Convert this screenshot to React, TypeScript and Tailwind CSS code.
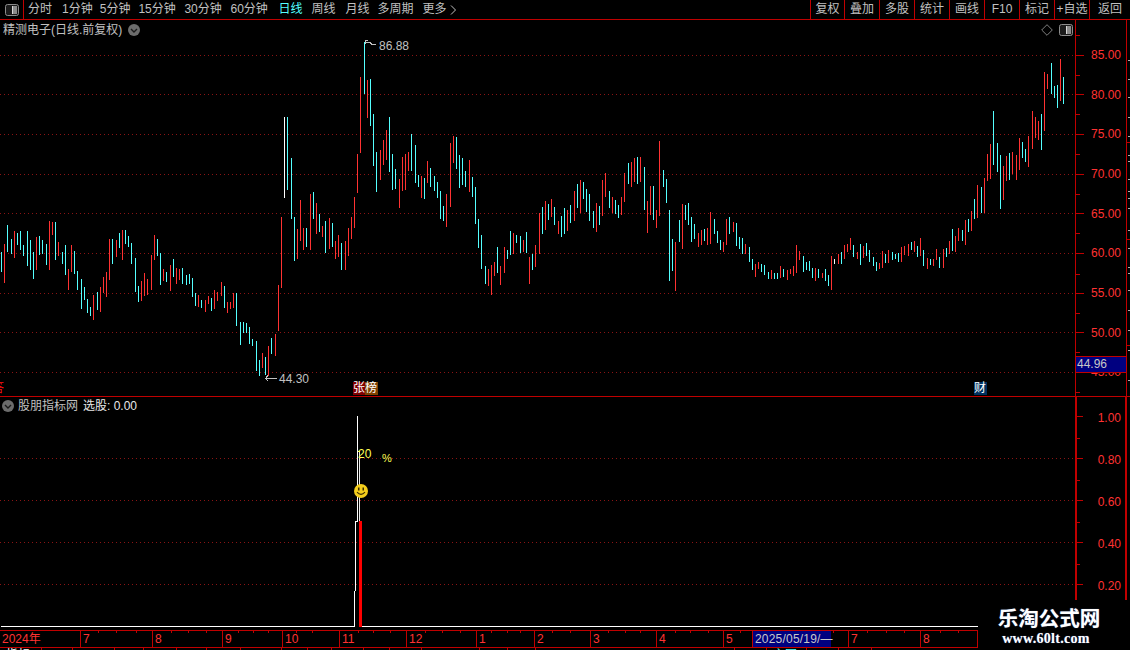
import React from "react";

type C = { x: number; t: number; b: number; c: string };
const COL: Record<string, string> = { r: "#ff3232", c: "#54ffff", w: "#ffffff" };
const parse = (s: string, ox: number, oy: number): C[] =>
  s.trim().split(/\s*;\s*/).filter(Boolean).map((p) => {
    const [k, x, t, b] = p.trim().split(/\s+/);
    return { x: Math.floor(+x / 3) + ox, t: Math.round(+t / 3) + oy, b: Math.round(+b / 3) + oy, c: COL[k] };
  });

const z3 = `c 4 127 186;r 13 102 218;c 22 45 126;c 34 87 132;r 43 64 143;c 52 70 105;c 61 64 120;c 70 105 138;c 82 64 168;c 91 90 180;c 100 126 207;r 109 82 180;c 118 79 135;c 127 90 132;c 139 102 165;r 148 33 180;r 157 37 75;c 166 37 150;r 175 97 138;c 187 126 162;c 196 105 195;r 205 178 240;r 214 105 187;c 223 124 192;c 232 183 240;c 244 208 297;c 253 231 270;c 262 267 309;c 271 291 318;r 280 255 330;c 292 247 300;r 301 231 306;r 310 201 249;r 319 186 261;r 328 87 210;c 337 87 162;r 349 90 141;c 358 69 114;r 367 60 150;c 376 60 102;c 385 78 111;c 394 99 162;c 406 144 246;c 415 228 276;r 424 213 273;r 433 189 258;r 442 207 255;r 454 135 240;r 463 75 150;c 472 87 138;c 481 129 225;r 490 177 213;c 499 186 216;r 511 165 243;c 520 147 201;r 529 174 222;r 538 177 210;c 547 174 222;c 559 195 225;c 568 192 222;c 577 204 261;c 586 249 288;r 595 255 291;c 604 270 294;r 616 270 306;r 625 258 282;c 634 264 303;r 643 240 297;r 652 246 273;r 664 216 258;c 673 228 294;r 682 276 309;r 691 276 297;r 700 249 294;c 709 249 348;c 721 336 405;c 730 336 369;c 739 339 369;c 748 351 402;c 757 387 408;c 769 393 483;c 778 450 498;r 787 429 474;c 796 441 495;r 805 408 498;c 814 384 432;r 826 372 438;r 835 225 363;r 844 21 234`;
const z4 = `w 13 262 503;c 22 262 481;c 34 385 566;c 43 561 692;r 52 597 687;r 61 510 633;r 70 594 660;c 79 594 651;r 91 492 660;c 100 486 567;r 109 519 612;c 118 552 606;r 127 588 621;c 136 573 669;r 148 564 657;c 157 579 651;r 166 633 687;r 175 615 681;c 184 639 720;r 196 633 720;r 205 594 678;r 214 561 627;r 223 501 594;r 232 372 489;r 241 141 369;c 253 36 192;r 262 150 264;c 271 147 288;c 280 252 408;c 289 366 486;r 301 360 450;r 310 330 405;r 319 300 390;c 328 261 426;c 337 372 480;c 346 417 477;r 358 447 534;r 367 381 483;r 376 372 480;r 385 366 423;c 394 312 423;c 406 345 459;c 415 435 471;r 424 438 504;c 433 444 507;r 442 393 459;c 451 414 471;c 463 438 483;c 472 456 504;c 481 483 567;c 490 528 573;r 499 492 591;r 511 339 531;r 520 318 399;c 529 321 417;c 538 375 474;c 547 384 465;c 556 423 471;r 568 390 486;c 577 441 501;c 586 471 582;c 595 567 654;c 604 615 717;c 616 708 762;r 625 717 768;r 634 705 795;r 643 696 738;c 652 651 729;r 661 708 765;r 673 651 729;c 682 660 687;c 691 603 675;r 700 609 672;c 709 615 639;c 721 618 669;r 730 630 666;c 739 606 669;r 748 681 762;c 757 672 720;r 766 645 711`;
const z5 = `r 28 249 372;c 37 231 312;r 46 213 300;c 55 222 270;r 64 207 261;c 73 231 285;r 85 273 312;c 94 258 321;c 103 234 312;r 112 240 303;c 121 225 279;r 133 183 273;c 142 162 234;r 151 150 249;c 160 156 207;c 169 177 246;c 178 192 273;c 190 243 294;r 199 219 306;c 208 228 285;r 217 150 258;r 226 129 201;c 238 183 234;r 247 201 249;c 256 210 252;c 265 225 264;r 274 201 255;r 283 129 216;c 295 99 162;r 304 96 171;r 313 84 156;c 322 81 162;r 331 81 156;c 343 111 240;r 352 213 309;r 361 168 255;c 370 168 270;r 379 240 294;r 388 33 258;c 400 120 171;c 409 147 219;c 418 240 453;c 427 327 423;r 436 336 483;c 448 270 336;r 457 222 357;c 466 225 270;c 475 219 285;c 484 261 336;c 493 282 327;r 505 309 351;r 514 300 345;c 523 297 333;r 532 294 345;r 541 246 342;c 553 267 312;c 562 303 339;c 571 330 360;r 580 336 366;r 589 267 345;c 598 261 312;r 610 276 306;c 619 279 348;c 628 321 357;c 637 324 372;r 646 342 372;c 658 351 396;c 667 387 420;r 676 402 441;r 685 396 417;c 694 402 426;c 703 405 435;c 715 426 447;r 724 420 447;c 733 429 447;c 742 429 447;r 751 408 444;c 760 417 441;r 772 420 450;r 781 417 432;r 790 408 438;r 799 345 429;r 808 363 390;c 820 378 426;c 829 396 420;c 838 393 423;c 847 414 444;r 856 414 453;c 865 417 444;r 877 429 444;c 886 417 453;c 895 435 468`;
const z6 = `r 34 618 720;w 43 627 642;r 55 612 642;c 64 606 642;r 73 585 627;r 82 582 606;r 91 564 600;c 100 585 621;r 112 606 627;c 121 582 645;r 130 588 624;c 139 579 618;c 148 600 636;c 160 621 648;c 169 636 663;r 178 639 657;r 187 603 654;c 196 612 639;r 205 600 639;c 217 606 630;c 226 612 627;c 235 609 636;r 244 591 636;r 253 588 615;r 265 582 618;c 274 576 600;r 283 573 606;c 292 588 621;r 301 564 618;c 310 600 648;r 322 624 657;c 331 627 645;r 340 627 648;r 349 597 630;c 358 621 654;r 370 597 654;c 379 594 621;r 388 573 612;c 397 537 603;r 406 558 606;r 415 534 573;c 427 540 573;r 436 510 585;c 445 507 546;r 454 483 543;c 463 447 507;r 472 405 504;c 484 411 489;r 493 384 489;r 502 312 393;r 511 282 387;c 520 183 345;c 532 279 366;c 541 315 477;r 550 348 450;r 559 318 393;c 568 309 390;r 577 306 372;r 589 315 390;r 598 264 360;c 607 276 324;c 616 297 336;r 625 258 351;r 637 183 297;r 646 201 264;r 655 213 270;c 664 192 300;r 673 66 243;r 682 72 117;c 694 39 132;c 703 108 144;c 712 105 174;r 721 27 153;c 730 81 162`;

const candles: C[] = [...parse(z3, 0, 210), ...parse(z4, 280, 30), ...parse(z5, 530, 130), ...parse(z6, 820, 50)];

const GRID_UP = [55, 94, 134, 174, 213, 253, 293, 332, 372];
const GRID_LOW = [458, 500, 542, 584];
const AXIS = "#c00000";
const DOT = "#8a1414";

const leftItems: [string, string, boolean][] = [
  ["分时", "ml-[4px]", false],
  ["1分钟", "ml-[10px]", false],
  ["5分钟", "ml-[7px]", false],
  ["15分钟", "ml-[8px]", false],
  ["30分钟", "ml-[8.7px]", false],
  ["60分钟", "ml-[8.7px]", false],
  ["日线", "ml-[10.7px]", true],
  ["周线", "ml-[9px]", false],
  ["月线", "ml-[10px]", false],
  ["多周期", "ml-[8px]", false],
  ["更多", "ml-[9px]", false],
];
const rightItems: [string, string][] = [
  ["复权", "w-[34px]"],
  ["叠加", "w-[35px]"],
  ["多股", "w-[35px]"],
  ["统计", "w-[35px]"],
  ["画线", "w-[35px]"],
  ["F10", "w-[35px]"],
  ["标记", "w-[35px]"],
  ["+自选", "w-[35px]"],
  ["返回", "w-[41px]"],
];

const upperLabels = ["85.00", "80.00", "75.00", "70.00", "65.00", "60.00", "55.00", "50.00", "45.00"];
const lowerLabels = ["1.00", "0.80", "0.60", "0.40", "0.20"];

const timeline: { w: number; t: string; box?: boolean }[] = [
  { w: 81, t: "2024年" },
  { w: 72, t: "7" },
  { w: 70, t: "8" },
  { w: 60, t: "9" },
  { w: 57, t: "10" },
  { w: 67, t: "11" },
  { w: 70, t: "12" },
  { w: 58, t: "1" },
  { w: 56, t: "2" },
  { w: 66, t: "3" },
  { w: 67, t: "4" },
  { w: 29, t: "5" },
  { w: 78, t: "2025/05/19/—", box: true },
  { w: 18, t: "" },
  { w: 72, t: "7" },
  { w: 57, t: "8" },
];
const smallTicks = [98, 116, 136, 171, 188, 206, 238, 253, 268, 296, 312, 358, 373, 390, 425, 442, 460, 491, 507, 520, 552, 570, 608, 625, 640, 675, 690, 708, 740, 833, 867, 886, 904, 940, 958, 977];
const bottomCells = [42, 31, 42, 29, 33, 30, 34, 41, 26, 24, 32, 26, 32, 58, 28, 28, 199, 32, 40, 32, 33];

const Toggle = () => (
  <svg width="14" height="12" viewBox="0 0 14 12">
    <rect x="0.5" y="0.5" width="13" height="11" rx="2" fill="#1c1c1c" stroke="#8c8c8c" />
    <rect x="7" y="2" width="5" height="8" fill="#8c8c8c" />
    <rect x="7" y="2" width="1" height="8" fill="#d8d8d8" />
  </svg>
);
const Down = () => (
  <svg width="12" height="12" viewBox="0 0 12 12" className="shrink-0">
    <circle cx="6" cy="6" r="6" fill="#6c6c6c" />
    <polyline points="3,5 6,8 9,5" fill="none" stroke="#1a1a1a" strokeWidth="1.4" />
  </svg>
);

export default function App() {
  return (
    <div className="relative flex h-[650px] w-[1130px] flex-col overflow-hidden bg-black font-['Liberation_Sans','Noto_Sans_CJK_SC',sans-serif] text-[12px] text-[#c0c0c0]">
      {/* top bar */}
      <div className="flex h-[20px] shrink-0 items-center border-b border-[#c00000] leading-[19px]">
        <div className="flex h-full w-[24px] items-center justify-center border-r border-[#c00000]">
          <Toggle />
        </div>
        {leftItems.map(([t, cls, on]) => (
          <span key={t} className={`${cls} ${on ? "text-[#54ffff]" : ""} whitespace-nowrap`}>
            {t}
          </span>
        ))}
        <svg width="7" height="10" viewBox="0 0 7 10" className="ml-[3px]">
          <polyline points="1,0.5 5.5,5 1,9.5" fill="none" stroke="#c0c0c0" />
        </svg>
        <div className="ml-auto flex h-full">
          {rightItems.map(([t, w]) => (
            <div key={t} className={`${w} flex items-center justify-center whitespace-nowrap border-l border-[#c00000]`}>
              {t}
            </div>
          ))}
        </div>
      </div>

      {/* upper panel */}
      <div className="flex h-[377px] shrink-0 border-b border-[#c00000]">
        <div className="relative w-[1075px] shrink-0">
          <svg className="absolute inset-0" width="1075" height="376" viewBox="0 20 1075 376" shapeRendering="crispEdges">
            {GRID_UP.map((y) => (
              <line key={y} x1="0" x2="1075" y1={y + 0.5} y2={y + 0.5} stroke={DOT} strokeDasharray="1 3" />
            ))}
            {candles.map((c, i) => (
              <rect key={i} x={c.x} y={c.t} width="1" height={Math.max(1, c.b - c.t)} fill={c.c} />
            ))}
            <polyline points="368,40.5 365.5,40.5 365.5,44 " fill="none" stroke="#c0c0c0" />
            <polyline points="366,42.5 370,42.5 372,44.5 376,44.5" fill="none" stroke="#c0c0c0" />
            <polyline points="268,375 265.5,378.5 268,381" fill="none" stroke="#c0c0c0" />
            <line x1="266" x2="277" y1="378.5" y2="378.5" stroke="#c0c0c0" />
          </svg>
          <div className="relative flex h-[19px] items-center pl-[3px] pt-[1px]">
            <span className="whitespace-nowrap">精测电子(日线.前复权)</span>
            <span className="ml-[6px]">
              <Down />
            </span>
          </div>
          <span className="absolute left-[379px] top-[19px] leading-[14px]">86.88</span>
          <span className="absolute left-[279px] top-[352px] leading-[14px]">44.30</span>
          <svg className="absolute left-[1041px] top-[4px]" width="12" height="12" viewBox="0 0 12 12">
            <polygon points="6,0.7 11.3,6 6,11.3 0.7,6" fill="none" stroke="#808080" />
          </svg>
          <div className="absolute left-[1059px] top-[4px]">
            <Toggle />
          </div>
          <div className="absolute left-0 top-[362px] h-[13px] w-[4px] overflow-hidden text-[#ff1010]">
            <span className="-ml-[8px] block w-[12px] leading-[13px]">答</span>
          </div>
          <div className="absolute left-[353px] top-[362px] flex h-[13px] leading-[13px] text-white">
            <span className="w-[12px] bg-[#800000]">张</span>
            <span className="w-[13px] bg-[#804000]">榜</span>
          </div>
          <span className="absolute left-[974px] top-[362px] h-[13px] w-[13px] bg-[#003060] leading-[13px] text-white">财</span>
        </div>
        <div className="relative w-[52px] shrink-0 border-x border-[#c00000] pt-[15px] text-[#ff3232]">
          <svg className="absolute left-0 top-0" width="10" height="376" viewBox="0 20 10 376" shapeRendering="crispEdges">
            {GRID_UP.map((y) => (
              <line key={y} x1="0" x2="8" y1={y + 0.5} y2={y + 0.5} stroke={AXIS} />
            ))}
            {[35, 75, 114, 154, 194, 233, 274, 313, 352, 392].map((y) => (
              <line key={y} x1="0" x2="4" y1={y + 0.5} y2={y + 0.5} stroke={AXIS} />
            ))}
          </svg>
          {upperLabels.map((l) => (
            <div key={l} className="flex h-[39.7px] items-center justify-end pr-[5px] leading-none">
              {l}
            </div>
          ))}
          <div className="absolute left-0 top-[336px] h-[17px] w-full border-y border-[#c00000] bg-[#000080] pl-[1px] leading-[15px] text-[#c8c8c8]">
            44.96
          </div>
        </div>
        <svg width="3" height="376" viewBox="0 20 3 376" shapeRendering="crispEdges" className="shrink-0">
          {[60, 79, 97, 117, 136, 155, 161, 179, 191, 198, 208, 230, 248, 267, 273, 290, 310, 330, 350, 380].map((y) => (
            <line key={y} x1="1" x2="3" y1={y + 0.5} y2={y + 0.5} stroke="#b0b0b0" />
          ))}
          {[142, 239, 345].map((y) => (
            <line key={y} x1="0" x2="3" y1={y + 0.5} y2={y + 0.5} stroke={AXIS} />
          ))}
        </svg>
      </div>

      {/* lower panel */}
      <div className="flex h-[233px] shrink-0">
        <div className="relative w-[1075px] shrink-0">
          <svg className="absolute inset-0" width="1075" height="233" viewBox="0 397 1075 233" shapeRendering="crispEdges">
            {GRID_LOW.map((y) => (
              <line key={y} x1="0" x2="1075" y1={y + 0.5} y2={y + 0.5} stroke={DOT} strokeDasharray="1 3" />
            ))}
            <rect x="1" y="626" width="354" height="1" fill="#ffffff" />
            <rect x="362" y="626" width="616" height="1" fill="#ffffff" />
            <rect x="354" y="591" width="1" height="36" fill="#ffffff" />
            <rect x="355" y="521" width="1" height="70" fill="#ffffff" />
            <rect x="355" y="521" width="3" height="1" fill="#ffffff" />
            <rect x="357" y="416" width="1" height="106" fill="#ffffff" />
            <rect x="359" y="451" width="1" height="70" fill="#e8e8e8" />
            <rect x="359" y="521" width="3" height="106" fill="#ff0000" />
            <rect x="358" y="451" width="2" height="1" fill="#ffff54" />
          </svg>
          <div className="relative flex h-[16px] items-center pl-[2px] pt-[1px]">
            <Down />
            <span className="ml-[4px] whitespace-nowrap">股朋指标网</span>
            <span className="ml-[5px] whitespace-nowrap text-[#e8e8e8]">选股: 0.00</span>
          </div>
          <span className="absolute left-[358px] top-[50px] leading-[14px] text-[#ffff54]">20</span>
          <span className="absolute left-[382px] top-[54px] text-[11px] leading-[14px] text-[#ffff54]">%</span>
          <svg className="absolute left-[354px] top-[87px]" width="14" height="14" viewBox="0 0 14 14">
            <circle cx="7" cy="7" r="7" fill="#f3cd1c" />
            <rect x="4" y="3.5" width="1.5" height="3" fill="#3a2c00" />
            <rect x="8.5" y="3.5" width="1.5" height="3" fill="#3a2c00" />
            <path d="M3 8.2 Q7 12.5 11 8.2" fill="none" stroke="#3a2c00" strokeWidth="1.1" />
          </svg>
        </div>
        <div className="relative h-[203px] w-[52px] shrink-0 border-x-2 border-[#c00000] text-[#ff3232]">
          <svg className="absolute left-0 top-0" width="10" height="203" viewBox="0 397 10 203" shapeRendering="crispEdges">
            {[416, 458, 500, 542, 584].map((y) => (
              <line key={y} x1="0" x2="6" y1={y + 0.5} y2={y + 0.5} stroke={AXIS} />
            ))}
            {[438, 480, 522, 564].map((y) => (
              <line key={y} x1="0" x2="3" y1={y + 0.5} y2={y + 0.5} stroke={AXIS} />
            ))}
          </svg>
          <div className="pt-0">
            {lowerLabels.map((l) => (
              <div key={l} className="flex h-[42px] items-center justify-end pr-[4px] leading-none">
                {l}
              </div>
            ))}
          </div>
        </div>
      </div>

      {/* time axis */}
      <div className="relative flex h-[18px] w-[978px] shrink-0 border-y border-[#c00000] text-[#ff3232]">
        {timeline.map((s, i) => (
          <div
            key={i}
            style={{ width: s.w }}
            className={
              s.box
                ? "shrink-0 whitespace-nowrap bg-[#000080] pl-[2px] leading-[16px] tracking-[0.2px] text-[#c8c8c8]"
                : "shrink-0 whitespace-nowrap border-r border-[#c00000] pl-[2px] leading-[16px]"
            }
          >
            {s.t}
          </div>
        ))}
        <svg className="absolute left-0 top-0" width="978" height="3" shapeRendering="crispEdges">
          {smallTicks.map((x) => (
            <line key={x} x1={x + 0.5} x2={x + 0.5} y1="0" y2="2" stroke={AXIS} />
          ))}
        </svg>
      </div>

      {/* bottom tabs, cut off by the window */}
      <div className="flex h-[2px] w-[978px] shrink-0 overflow-hidden">
        {bottomCells.map((w, i) => (
          <div key={i} style={{ width: w }} className="h-[14px] shrink-0 border-r border-[#c00000] pl-[6px] leading-[14px] text-white">
            {i === 0 ? "指标" : i === 18 ? <span className="text-[#54ffff]">主图</span> : ""}
          </div>
        ))}
      </div>

      {/* watermark */}
      <div className="absolute left-[978px] top-[600px] flex h-[50px] w-[152px] flex-col items-center bg-black text-white">
        <span className="-ml-[10px] mt-[8px] whitespace-nowrap text-[20.5px] font-bold leading-[22px] [text-shadow:0_0_1px_#5070b0]">乐淘公式网</span>
        <span className="-ml-[16px] mt-[1px] whitespace-nowrap font-['Liberation_Serif',serif] text-[14px] font-bold leading-[16px] tracking-[0.3px] [text-shadow:0_0_1px_#5070b0]">
          www.60lt.com
        </span>
      </div>
    </div>
  );
}
